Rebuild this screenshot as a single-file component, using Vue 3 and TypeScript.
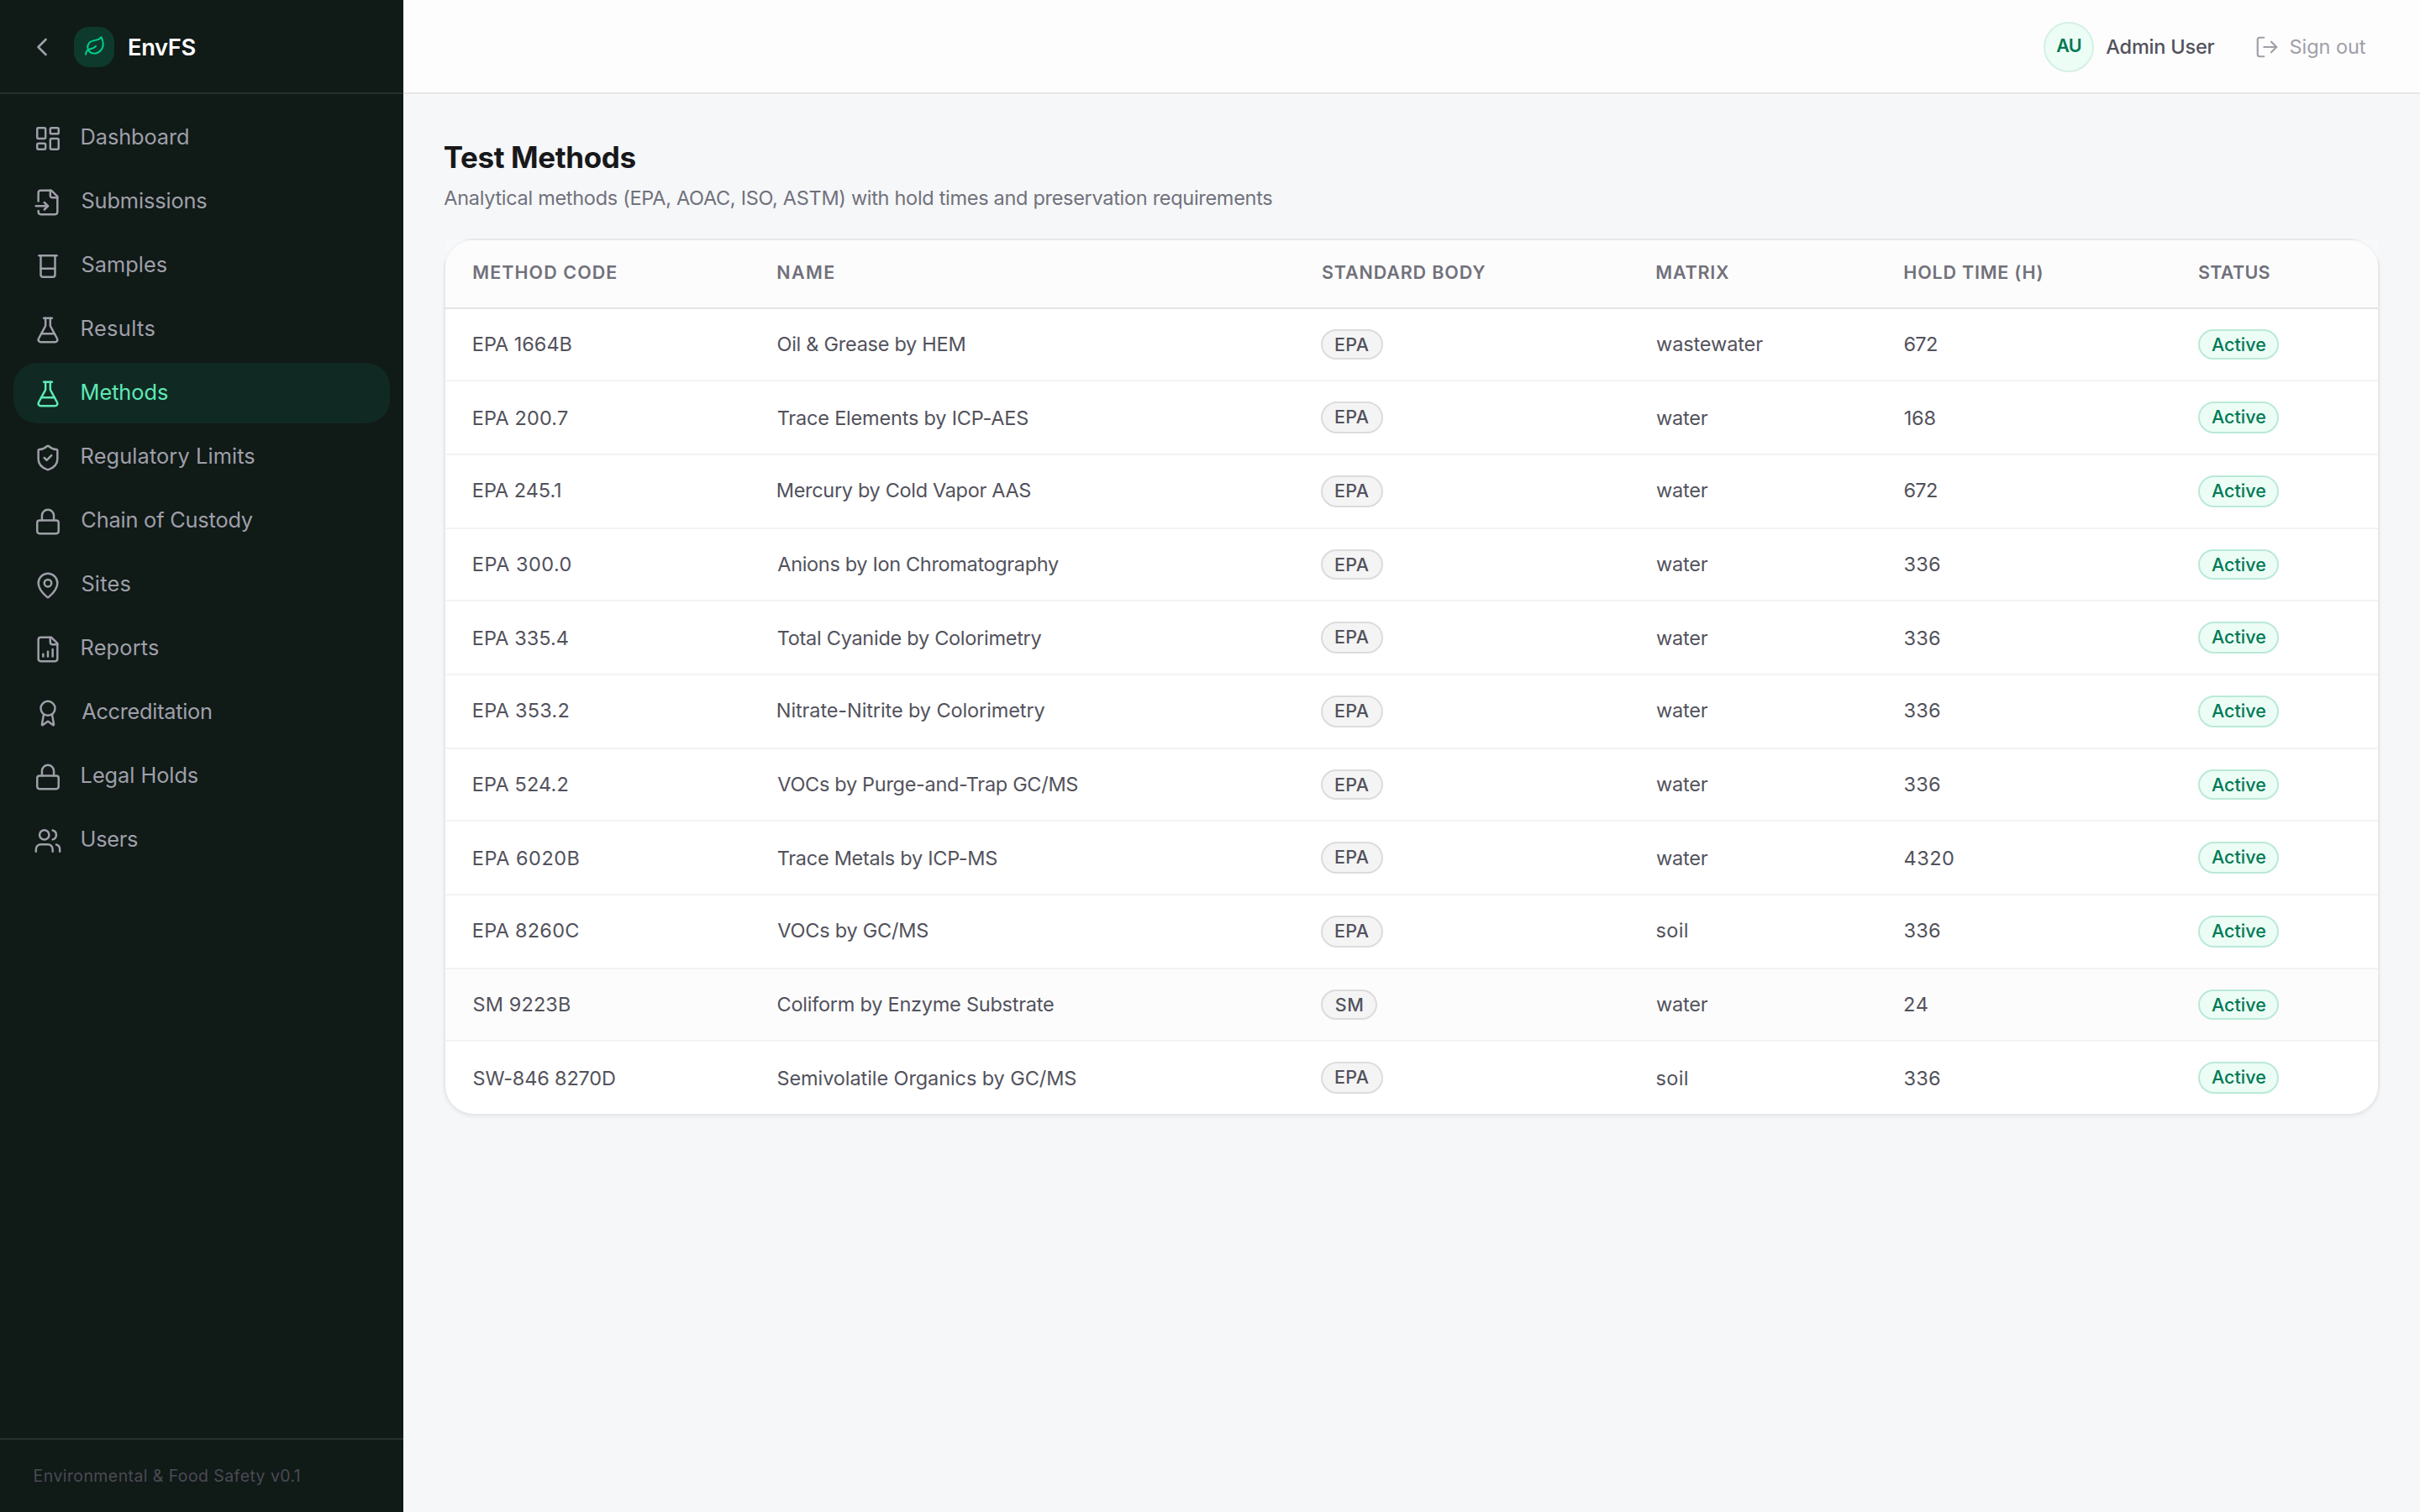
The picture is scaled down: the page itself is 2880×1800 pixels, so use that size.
<script setup lang="ts">
interface NavItem {
  label: string
  width: number
  icon: string[]
  active?: boolean
}

interface Method {
  code: [string, number]
  name: [string, number]
  body: string
  matrix: string
  hold: [string, number]
  hover?: boolean
}

/* Soft edge of a glyph, left free on the leading side of every label. */
const EDGE = 0.8

/* Tracks a label so that its ink fills the given width, starting at its left edge. */
const vInk = {
  mounted(el: HTMLElement, binding: { value: number }) {
    const style = getComputedStyle(el)
    const ctx = document.createElement('canvas').getContext('2d')
    const text = (el.textContent ?? '').trim()
    if (!ctx || text.length < 2) return
    // Measured at ten times the size, as glyph bounds come back in whole pixels.
    ctx.font = `${style.fontWeight} ${parseFloat(style.fontSize) * 10}px ${style.fontFamily}`
    const m = ctx.measureText(text)
    const left = m.actualBoundingBoxLeft / 10
    const natural = left + m.actualBoundingBoxRight / 10
    el.style.width = `${binding.value}px`
    el.style.textIndent = `${left + EDGE}px`
    el.style.letterSpacing = `${(binding.value - natural - EDGE * 1.5) / (text.length - 1)}px`
  },
}

const flask = [
  'M14 2v6a2 2 0 0 0 .245.96l5.51 10.08A2 2 0 0 1 18 22H6a2 2 0 0 1-1.755-2.96l5.51-10.08A2 2 0 0 0 10 8V2',
  'M6.453 15h11.094',
  'M8.5 2h7',
]
const lock = [
  'M5 11h14a2 2 0 0 1 2 2v7a2 2 0 0 1-2 2H5a2 2 0 0 1-2-2v-7a2 2 0 0 1 2-2z',
  'M7 11V7a5 5 0 0 1 10 0v4',
]

const nav: NavItem[] = [
  {
    label: 'Dashboard',
    width: 127,
    icon: [
      'M4 3h5a1 1 0 0 1 1 1v7a1 1 0 0 1-1 1H4a1 1 0 0 1-1-1V4a1 1 0 0 1 1-1z',
      'M15 3h5a1 1 0 0 1 1 1v3a1 1 0 0 1-1 1h-5a1 1 0 0 1-1-1V4a1 1 0 0 1 1-1z',
      'M15 12h5a1 1 0 0 1 1 1v7a1 1 0 0 1-1 1h-5a1 1 0 0 1-1-1v-7a1 1 0 0 1 1-1z',
      'M4 16h5a1 1 0 0 1 1 1v3a1 1 0 0 1-1 1H4a1 1 0 0 1-1-1v-3a1 1 0 0 1 1-1z',
    ],
  },
  {
    label: 'Submissions',
    width: 149,
    icon: [
      'M14 2v4a2 2 0 0 0 2 2h4',
      'M4 11V4a2 2 0 0 1 2-2h9l5 5v13a2 2 0 0 1-2 2H6a2 2 0 0 1-2-2v-1',
      'M2 15h10',
      'm9 18 3-3-3-3',
    ],
  },
  {
    label: 'Samples',
    width: 101.5,
    icon: ['M4.5 3h15', 'M6 3v16a2 2 0 0 0 2 2h8a2 2 0 0 0 2-2V3', 'M6 14h12'],
  },
  { label: 'Results', width: 87, icon: flask },
  { label: 'Methods', width: 102.5, icon: flask, active: true },
  {
    label: 'Regulatory Limits',
    width: 206,
    icon: [
      'M20 13c0 5-3.5 7.5-7.66 8.95a1 1 0 0 1-.67-.01C7.5 20.5 4 18 4 13V6a1 1 0 0 1 1-1c2 0 4.5-1.2 6.24-2.72a1.17 1.17 0 0 1 1.52 0C14.51 3.81 17 5 19 5a1 1 0 0 1 1 1z',
      'm9 12 2 2 4-4',
    ],
  },
  { label: 'Chain of Custody', width: 204, icon: lock },
  {
    label: 'Sites',
    width: 58,
    icon: [
      'M20 10c0 4.993-5.539 10.193-7.399 11.799a1 1 0 0 1-1.202 0C9.539 20.193 4 14.993 4 10a8 8 0 0 1 16 0',
      'M15 10a3 3 0 1 1-6 0a3 3 0 1 1 6 0',
    ],
  },
  {
    label: 'Reports',
    width: 91.5,
    icon: [
      'M15 2H6a2 2 0 0 0-2 2v16a2 2 0 0 0 2 2h12a2 2 0 0 0 2-2V7z',
      'M14 2v4a2 2 0 0 0 2 2h4',
      'M8 18v-2',
      'M12 18v-4',
      'M16 18v-6',
    ],
  },
  {
    label: 'Accreditation',
    width: 154.5,
    icon: [
      'm15.477 12.89 1.515 8.526a.5.5 0 0 1-.81.47l-3.58-2.687a1 1 0 0 0-1.197 0l-3.586 2.686a.5.5 0 0 1-.81-.469l1.514-8.526',
      'M18 8a6 6 0 1 1-12 0a6 6 0 1 1 12 0',
    ],
  },
  { label: 'Legal Holds', width: 138.5, icon: lock },
  {
    label: 'Users',
    width: 66.5,
    icon: [
      'M16 21v-2a4 4 0 0 0-4-4H6a4 4 0 0 0-4 4v2',
      'M13 7a4 4 0 1 1-8 0a4 4 0 1 1 8 0',
      'M22 21v-2a4 4 0 0 0-3-3.87',
      'M16 3.13a4 4 0 0 1 0 7.75',
    ],
  },
]

const columns: [string, number][] = [
  ['Method Code', 170.5],
  ['Name', 67.5],
  ['Standard Body', 194.5],
  ['Matrix', 86.5],
  ['Hold Time (h)', 163.5],
  ['Status', 85],
]

const bodyWidth: Record<string, number> = { EPA: 40, SM: 32.5 }
const matrixWidth: Record<string, number> = { wastewater: 127, water: 61.5, soil: 37 }

const methods: Method[] = [
  { code: ['EPA 1664B', 117], name: ['Oil & Grease by HEM', 223], body: 'EPA', matrix: 'wastewater', hold: ['672', 39] },
  { code: ['EPA 200.7', 112.5], name: ['Trace Elements by ICP-AES', 298.5], body: 'EPA', matrix: 'water', hold: ['168', 37] },
  { code: ['EPA 245.1', 104], name: ['Mercury by Cold Vapor AAS', 301.5], body: 'EPA', matrix: 'water', hold: ['672', 39] },
  { code: ['EPA 300.0', 116.5], name: ['Anions by Ion Chromatography', 335], body: 'EPA', matrix: 'water', hold: ['336', 42.5] },
  { code: ['EPA 335.4', 113], name: ['Total Cyanide by Colorimetry', 314.5], body: 'EPA', matrix: 'water', hold: ['336', 42.5] },
  { code: ['EPA 353.2', 113.5], name: ['Nitrate-Nitrite by Colorimetry', 318.5], body: 'EPA', matrix: 'water', hold: ['336', 42.5] },
  { code: ['EPA 524.2', 112.5], name: ['VOCs by Purge-and-Trap GC/MS', 357.5], body: 'EPA', matrix: 'water', hold: ['336', 42.5] },
  { code: ['EPA 6020B', 126], name: ['Trace Metals by ICP-MS', 261.5], body: 'EPA', matrix: 'water', hold: ['4320', 59] },
  { code: ['EPA 8260C', 125.5], name: ['VOCs by GC/MS', 179.5], body: 'EPA', matrix: 'soil', hold: ['336', 42.5] },
  { code: ['SM 9223B', 115.5], name: ['Coliform by Enzyme Substrate', 329], body: 'SM', matrix: 'water', hold: ['24', 28], hover: true },
  { code: ['SW-846 8270D', 169], name: ['Semivolatile Organics by GC/MS', 355.5], body: 'EPA', matrix: 'soil', hold: ['336', 42.5] },
]
</script>

<template>
  <div class="app">
    <aside class="sidebar">
      <div class="brand">
        <svg class="collapse" viewBox="0 0 24 24"><path d="m15 18-6-6 6-6" /></svg>
        <span class="logo">
          <svg viewBox="0 0 24 24">
            <path d="M11 20A7 7 0 0 1 9.8 6.1C15.5 5 17 4.48 19 2c1 2 2 4.18 2 8 0 5.5-4.78 10-10 10Z" />
            <path d="M2 21c0-3 1.85-5.36 5.08-6C9.5 14.52 12 13 13 12" />
          </svg>
        </span>
        <span v-ink="79.5" class="brand-name">EnvFS</span>
      </div>
      <nav class="nav">
        <a v-for="item in nav" :key="item.label" class="nav-item" :class="{ active: item.active }">
          <svg viewBox="0 0 24 24"><path v-for="d in item.icon" :key="d" :d="d" /></svg>
          <span v-ink="item.width" class="nav-label">{{ item.label }}</span>
        </a>
      </nav>
      <footer class="side-foot"><span v-ink="316" class="version">Environmental &amp; Food Safety v0.1</span></footer>
    </aside>

    <div class="page">
      <header class="topbar">
        <span class="avatar"><span v-ink="29.5" class="initials">AU</span></span>
        <span v-ink="129.5" class="user">Admin User</span>
        <svg class="exit" viewBox="0 0 24 24">
          <path d="M9 21H5a2 2 0 0 1-2-2V5a2 2 0 0 1 2-2h4" />
          <path d="m16 17 5-5-5-5" />
          <path d="M21 12H9" />
        </svg>
        <span v-ink="90.5" class="signout">Sign out</span>
      </header>

      <main class="main">
        <h1 class="title"><span v-ink="228.5">Test Methods</span></h1>
        <p class="subtitle">
          <span v-ink="986">Analytical methods (EPA, AOAC, ISO, ASTM) with hold times and preservation requirements</span>
        </p>

        <section class="card">
          <div class="grid head">
            <div v-for="[label, width] in columns" :key="label"><span v-ink="width">{{ label.toUpperCase() }}</span></div>
          </div>
          <div v-for="m in methods" :key="m.code[0]" class="grid row" :class="{ hover: m.hover }">
            <div class="cell"><span v-ink="m.code[1]">{{ m.code[0] }}</span></div>
            <div class="cell"><span v-ink="m.name[1]">{{ m.name[0] }}</span></div>
            <div class="pill-cell"><span class="pill neutral"><span v-ink="bodyWidth[m.body]">{{ m.body }}</span></span></div>
            <div class="cell"><span v-ink="matrixWidth[m.matrix]">{{ m.matrix }}</span></div>
            <div class="cell"><span v-ink="m.hold[1]">{{ m.hold[0] }}</span></div>
            <div class="pill-cell"><span class="pill ok"><span v-ink="64.5">Active</span></span></div>
          </div>
        </section>
      </main>
    </div>
  </div>
</template>

<style>
body {
  margin: 0;
  background: #f5f7f9;
}
</style>

<style scoped>
.app {
  display: flex;
  width: 2880px;
  height: 1800px;
  overflow: hidden;
  background: #f5f7f9;
  font-family: Inter, 'Liberation Sans', sans-serif;
}
.app * {
  box-sizing: border-box;
}
.app span {
  display: inline-block;
  white-space: nowrap;
}
svg {
  display: block;
  flex: none;
  fill: none;
  stroke: currentColor;
  stroke-width: 1.75;
  stroke-linecap: round;
  stroke-linejoin: round;
}

/* Sidebar */
.sidebar {
  display: flex;
  flex: none;
  flex-direction: column;
  width: 480px;
  background: #101a17;
  color: #9f9fa9;
}
.brand {
  display: flex;
  align-items: flex-start;
  height: 112px;
  padding: 32px 0 0 32px;
  border-bottom: 2px solid #27302d;
}
.collapse {
  width: 36px;
  height: 36px;
  margin-top: 6px;
}
.app .logo {
  display: block;
  width: 48px;
  height: 48px;
  margin-left: 20px;
  padding: 10px 0 0 12px;
  border-radius: 18px;
  background: #0d3a2c;
  color: #00d492;
}
.logo svg {
  width: 26px;
  height: 26px;
}
.brand-name {
  margin: 5px 0 0 17px;
  color: #fff;
  font-size: 27.3px;
  font-weight: 600;
  line-height: 39px;
}
.nav {
  display: flex;
  flex: 1;
  flex-direction: column;
  gap: 4px;
  padding: 16px;
}
.nav-item {
  display: flex;
  align-items: flex-start;
  height: 72px;
  padding-left: 24px;
  border-radius: 28px;
}
.nav-item svg {
  width: 34px;
  height: 34px;
  margin-top: 20px;
}
.nav-label {
  margin: 16px 0 0 23px;
  font-size: 25.4px;
  line-height: 37px;
}
.nav-item.active {
  background: #102a23;
  color: #5ee9b5;
}
.side-foot {
  height: 88px;
  padding: 28px 0 0 40.5px;
  border-top: 2px solid #27302d;
}
.version {
  color: #4b4a54;
  font-size: 19.5px;
  line-height: 30px;
}

/* Top bar */
.page {
  flex: 1;
  min-width: 0;
}
.topbar {
  display: flex;
  align-items: flex-start;
  justify-content: flex-end;
  height: 112px;
  padding: 26px 64.5px 0 0;
  border-bottom: 2px solid #e6e7e8;
  background: #fdfdfd;
}
.app .avatar {
  display: block;
  width: 60px;
  height: 60px;
  padding: 10px 0 0 13px;
  border: 2px solid #d5f0e5;
  border-radius: 50%;
  background: #ecfdf5;
}
.initials {
  color: #007a55;
  font-size: 21.5px;
  font-weight: 600;
  line-height: 32px;
}
.user {
  margin: 13px 0 0 14px;
  color: #52525c;
  font-size: 23.5px;
  font-weight: 480;
  line-height: 33px;
}
.exit {
  width: 30px;
  height: 30px;
  margin: 15px 0 0 47.5px;
  color: #9f9fa9;
}
.signout {
  margin: 13px 0 0 12px;
  color: #9f9fa9;
  font-size: 23.5px;
  line-height: 33px;
}

/* Content */
.main {
  padding: 54px 48px 0;
}
.title {
  height: 42px;
  margin: 0 0 11px;
  color: #18181b;
  font-size: 35px;
  font-weight: 650;
  line-height: 42px;
}
.subtitle {
  height: 33px;
  margin: 0 0 32px;
  color: #71717b;
  font-size: 23.5px;
  line-height: 33px;
}
.card {
  border: 2px solid #e7e8ea;
  border-radius: 36px;
  background: #fff;
  box-shadow: 0 2px 4px rgba(24, 24, 27, 0.05);
}
.grid {
  display: grid;
  grid-template-columns: 362px 647px 399px 295px 350px 1fr;
  align-items: start;
  padding-left: 33px;
}
.head {
  height: 82px;
  padding-top: 22px;
  border-bottom: 2px solid #e4e4e5;
  background: rgba(250, 250, 250, 0.6);
  color: #71717b;
  font-size: 21.5px;
  font-weight: 600;
  line-height: 32px;
}
.head > :nth-child(3) {
  padding-left: 1px;
}
.row {
  height: 88px;
  border-bottom: 2px solid #f3f3f4;
  color: #52525c;
  font-size: 23.5px;
  line-height: 33px;
}
.row:nth-child(3n + 2) {
  height: 86px;
}
.row:last-child {
  height: 86px;
  border-bottom: 0;
}
.row.hover {
  background: #fcfcfc;
}
.cell {
  height: 33px;
  margin-top: 25px;
}
.row:nth-child(3n) .cell {
  margin-top: 27px;
}
.pill-cell {
  display: flex;
  padding-top: 24px;
}
.pill {
  height: 38px;
  padding: 0 15px;
  border: 2px solid;
  border-radius: 19px;
  font-size: 21.5px;
  font-weight: 500;
  line-height: 32px;
}
.pill > span {
  display: block;
}
.row:nth-child(3n + 2) .pill {
  height: 36px;
}
.neutral {
  border-color: #dcdcdd;
  background: #f4f4f4;
}
.ok {
  padding: 0 13.75px;
  border-color: #bae9d8;
  background: #ecfdf5;
  color: #007a55;
}
</style>
